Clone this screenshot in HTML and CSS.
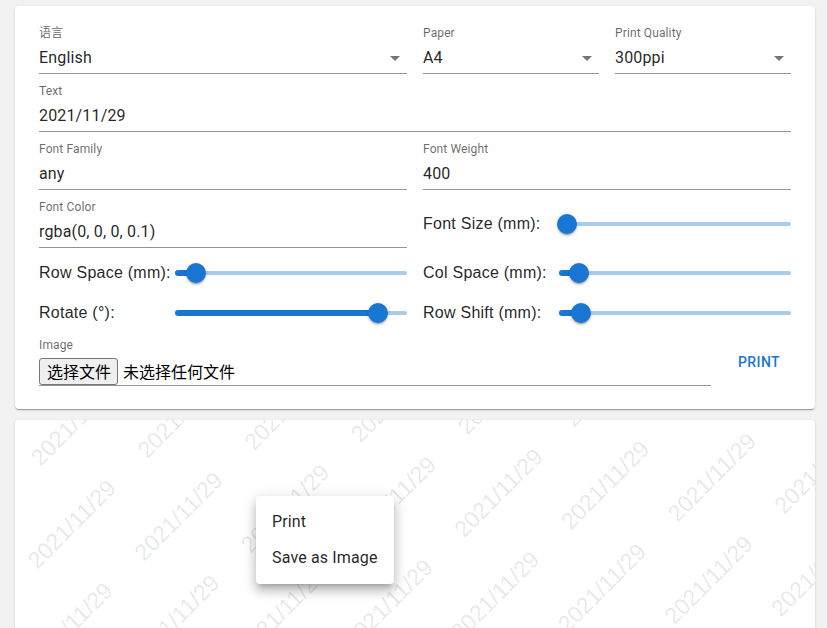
FILE: index.html
```html
<!DOCTYPE html>
<html lang="zh">
<head>
<meta charset="utf-8">
<title>Watermark</title>
<link rel="stylesheet" href="styles.css">
</head>
<body>
<main class="page">
  <section class="card settings">
    <div class="form">
      <div class="field">
        <span class="label">语言</span>
        <div class="control"><span class="value">English</span><svg class="arrow" viewBox="0 0 24 24"><path d="M7 10l5 5 5-5z"/></svg></div>
      </div>
      <div class="pair">
        <div class="field">
          <span class="label">Paper</span>
          <div class="control"><span class="value">A4</span><svg class="arrow" viewBox="0 0 24 24"><path d="M7 10l5 5 5-5z"/></svg></div>
        </div>
        <div class="field">
          <span class="label">Print Quality</span>
          <div class="control"><span class="value">300ppi</span><svg class="arrow" viewBox="0 0 24 24"><path d="M7 10l5 5 5-5z"/></svg></div>
        </div>
      </div>
      <div class="field span2">
        <span class="label">Text</span>
        <div class="control"><span class="value">2021/11/29</span></div>
      </div>
      <div class="field">
        <span class="label">Font Family</span>
        <div class="control"><span class="value">any</span></div>
      </div>
      <div class="field">
        <span class="label">Font Weight</span>
        <div class="control"><span class="value">400</span></div>
      </div>
      <div class="field">
        <span class="label">Font Color</span>
        <div class="control"><span class="value">rgba(0, 0, 0, 0.1)</span></div>
      </div>
      <div class="slider-row">
        <span class="slider-label">Font Size (mm):</span>
        <div class="slider"><span class="rail"></span><span class="track" style="width:3.5%"></span><span class="thumb" style="left:3.5%"></span></div>
      </div>
      <div class="slider-row">
        <span class="slider-label">Row Space (mm):</span>
        <div class="slider"><span class="rail"></span><span class="track" style="width:8.9%"></span><span class="thumb" style="left:8.9%"></span></div>
      </div>
      <div class="slider-row">
        <span class="slider-label">Col Space (mm):</span>
        <div class="slider"><span class="rail"></span><span class="track" style="width:8.7%"></span><span class="thumb" style="left:8.7%"></span></div>
      </div>
      <div class="slider-row">
        <span class="slider-label">Rotate (°):</span>
        <div class="slider"><span class="rail"></span><span class="track" style="width:87.6%"></span><span class="thumb" style="left:87.6%"></span></div>
      </div>
      <div class="slider-row">
        <span class="slider-label">Row Shift (mm):</span>
        <div class="slider"><span class="rail"></span><span class="track" style="width:9.4%"></span><span class="thumb" style="left:9.4%"></span></div>
      </div>
      <div class="image-row span2">
        <div class="field image-field">
          <span class="label">Image</span>
          <div class="control file"><span class="file-btn">选择文件</span><span class="file-name">未选择任何文件</span></div>
        </div>
        <button class="print" type="button">Print</button>
      </div>
    </div>
  </section>

  <section class="card preview">
    <svg class="wm" width="800" height="240" viewBox="0 0 800 240">
      <g class="wm-text">
        <text x="25.5" y="47" transform="rotate(-45 25.5 47)">2021/11/29</text>
        <text x="132.2" y="39.2" transform="rotate(-45 132.2 39.2)">2021/11/29</text>
        <text x="238.9" y="31.4" transform="rotate(-45 238.9 31.4)">2021/11/29</text>
        <text x="345.6" y="23.6" transform="rotate(-45 345.6 23.6)">2021/11/29</text>
        <text x="452.3" y="15.8" transform="rotate(-45 452.3 15.8)">2021/11/29</text>
        <text x="559" y="8" transform="rotate(-45 559 8)">2021/11/29</text>
        <text x="665.7" y="0.2" transform="rotate(-45 665.7 0.2)">2021/11/29</text>

        <text x="22.2" y="149.7" transform="rotate(-45 22.2 149.7)">2021/11/29</text>
        <text x="128.9" y="141.9" transform="rotate(-45 128.9 141.9)">2021/11/29</text>
        <text x="235.6" y="134.1" transform="rotate(-45 235.6 134.1)">2021/11/29</text>
        <text x="342.3" y="126.3" transform="rotate(-45 342.3 126.3)">2021/11/29</text>
        <text x="449" y="118.5" transform="rotate(-45 449 118.5)">2021/11/29</text>
        <text x="555.7" y="110.7" transform="rotate(-45 555.7 110.7)">2021/11/29</text>
        <text x="662.4" y="102.9" transform="rotate(-45 662.4 102.9)">2021/11/29</text>
        <text x="769.1" y="95.1" transform="rotate(-45 769.1 95.1)">2021/11/29</text>

        <text x="18.9" y="252.4" transform="rotate(-45 18.9 252.4)">2021/11/29</text>
        <text x="125.6" y="244.6" transform="rotate(-45 125.6 244.6)">2021/11/29</text>
        <text x="232.3" y="236.8" transform="rotate(-45 232.3 236.8)">2021/11/29</text>
        <text x="339" y="229" transform="rotate(-45 339 229)">2021/11/29</text>
        <text x="445.7" y="221.2" transform="rotate(-45 445.7 221.2)">2021/11/29</text>
        <text x="552.4" y="213.4" transform="rotate(-45 552.4 213.4)">2021/11/29</text>
        <text x="659.1" y="205.6" transform="rotate(-45 659.1 205.6)">2021/11/29</text>
        <text x="765.8" y="197.8" transform="rotate(-45 765.8 197.8)">2021/11/29</text>
      </g>
    </svg>
    <ul class="menu">
      <li>Print</li>
      <li>Save as Image</li>
    </ul>
  </section>
</main>
</body>
</html>
```

FILE: styles.css
```css
* {
  box-sizing: border-box;
}

html,
body {
  margin: 0;
}

body {
  background: #f2f2f2;
  font-family: Roboto, "Noto Sans CJK SC", sans-serif;
  height: 628px;
  overflow: hidden;
}

.page {
  padding: 6px 12px 0 15px;
}

.card {
  width: 800px;
  background: #fff;
  border-radius: 4px;
  box-shadow: 0 2px 1px -1px rgba(0, 0, 0, 0.2), 0 1px 1px 0 rgba(0, 0, 0, 0.14), 0 1px 3px 0 rgba(0, 0, 0, 0.12);
}

.settings {
  padding: 19px 24px 23px;
}

.form {
  display: grid;
  grid-template-columns: 1fr 1fr;
  column-gap: 16px;
  row-gap: 9px;
}

.pair {
  display: grid;
  grid-template-columns: 1fr 1fr;
  column-gap: 16px;
}

.span2 {
  grid-column: 1 / -1;
}

.label {
  display: block;
  font-size: 12px;
  line-height: 16px;
  letter-spacing: 0.01em;
  color: rgba(0, 0, 0, 0.6);
}

.control {
  display: flex;
  align-items: center;
  height: 33px;
  padding: 5px 0 4px;
  border-bottom: 1px solid rgba(0, 0, 0, 0.42);
  font-size: 16px;
  line-height: 23px;
  letter-spacing: 0.01em;
  color: rgba(0, 0, 0, 0.87);
}

.value {
  flex: 1;
}

.arrow {
  flex: none;
  width: 24px;
  height: 24px;
  fill: rgba(0, 0, 0, 0.54);
}

.slider-row {
  display: flex;
  align-items: center;
  height: 31px;
  align-self: center;
}

.slider-label {
  flex: none;
  width: 136px;
  padding-top: 1px;
  font-family: "Liberation Sans", Arial, sans-serif;
  font-size: 16px;
  letter-spacing: 0.25px;
  color: rgba(0, 0, 0, 0.87);
}

.slider {
  position: relative;
  flex: 1;
  height: 20px;
}

.rail {
  position: absolute;
  left: 0;
  right: 0;
  top: 8px;
  height: 4px;
  border-radius: 2px;
  background: #1976d2;
  opacity: 0.38;
}

.track {
  position: absolute;
  left: 0;
  top: 7px;
  height: 6px;
  border-radius: 3px;
  background: #1976d2;
}

.thumb {
  position: absolute;
  top: 0;
  width: 20px;
  height: 20px;
  margin-left: -10px;
  border-radius: 50%;
  background: #1976d2;
  box-shadow: 0 3px 1px -2px rgba(0, 0, 0, 0.2), 0 2px 2px 0 rgba(0, 0, 0, 0.14), 0 1px 5px 0 rgba(0, 0, 0, 0.12);
}

.image-row {
  display: flex;
  align-items: center;
  gap: 16px;
}

.image-field {
  flex: 1;
}

.control.file {
  align-items: flex-start;
  padding: 5px 0 0;
}

.file-btn {
  display: inline-block;
  height: 27px;
  padding: 0 6px 0 7px;
  border: 1px solid #767676;
  border-radius: 3px;
  background: #efefef;
  color: #000;
  font-family: "Noto Sans CJK SC", sans-serif;
  font-size: 16px;
  line-height: 25px;
  letter-spacing: 0;
}

.file-name {
  margin-left: 5px;
  color: #000;
  font-family: "Noto Sans CJK SC", sans-serif;
  font-size: 16px;
  line-height: 27px;
  letter-spacing: 0;
}

.print {
  flex: none;
  min-width: 64px;
  margin-top: 1px;
  padding: 6px 8px;
  border: none;
  border-radius: 4px;
  background: transparent;
  color: #1976d2;
  font-family: Roboto, sans-serif;
  font-weight: 500;
  font-size: 14px;
  line-height: 24.5px;
  letter-spacing: 0.02857em;
  text-transform: uppercase;
}

.preview {
  position: relative;
  margin-top: 11px;
  height: 240px;
  overflow: hidden;
}

.wm {
  display: block;
}

.wm-text {
  font-family: "Liberation Sans", Arial, sans-serif;
  font-size: 23px;
  fill: rgba(0, 0, 0, 0.1);
}

.menu {
  position: absolute;
  left: 241px;
  top: 76px;
  margin: 0;
  padding: 8px 0;
  list-style: none;
  background: #fff;
  border-radius: 4px;
  box-shadow: 0 5px 5px -3px rgba(0, 0, 0, 0.2), 0 8px 10px 1px rgba(0, 0, 0, 0.14), 0 3px 14px 2px rgba(0, 0, 0, 0.12);
}

.menu li {
  padding: 6px 16px;
  font-size: 16px;
  line-height: 24px;
  letter-spacing: 0.00938em;
  color: rgba(0, 0, 0, 0.87);
  white-space: nowrap;
}
```
